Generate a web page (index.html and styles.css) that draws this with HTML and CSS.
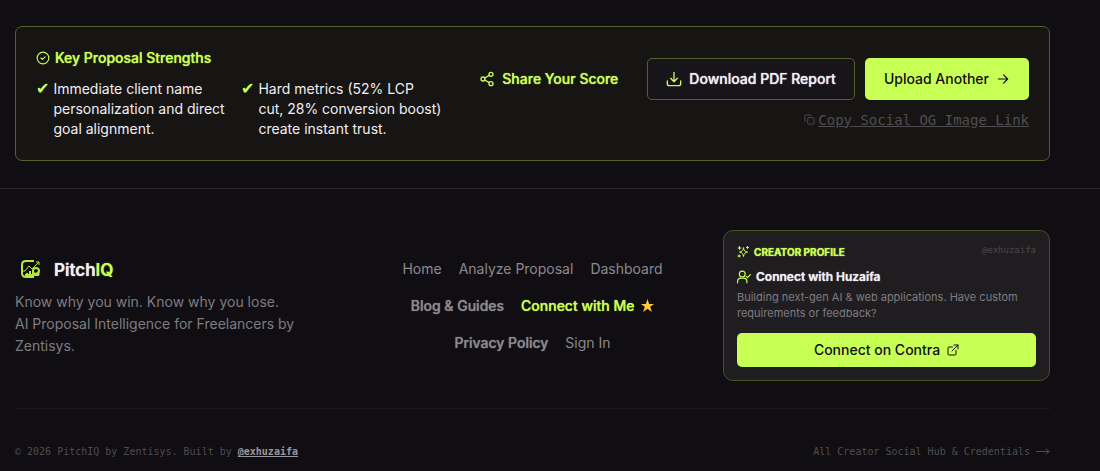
FILE: index.html
```html
<!DOCTYPE html>
<html lang="en">
<head>
    <meta charset="UTF-8">
    <meta name="viewport" content="width=device-width, initial-scale=1.0">
    <title>PitchIQ</title>
    <link rel="stylesheet" href="styles.css">
</head>
<body>
    <main class="page">
        <section class="results-card">
            <div class="strengths">
                <h2 class="strengths-title">
                    <svg class="icon" width="14" height="14" viewBox="0 0 24 24"><circle cx="12" cy="12" r="10"/><path d="m8.500 12 2.500 2.500 4.500-4.500"/></svg>
                    Key Proposal Strengths
                </h2>
                <ul class="strengths-list">
                    <li><span class="check">✔</span><span>Immediate client name personalization and direct goal alignment.</span></li>
                    <li><span class="check">✔</span><span>Hard metrics (52% LCP<br>cut, 28% conversion boost) create instant trust.</span></li>
                </ul>
            </div>
            <div class="actions">
                <div class="buttons">
                    <button type="button" class="btn btn-ghost">
                        <svg class="icon" width="16" height="16" viewBox="0 0 24 24"><circle cx="18" cy="5" r="3"/><circle cx="6" cy="12" r="3"/><circle cx="18" cy="19" r="3"/><path d="m8.590 13.510 6.830 3.980M15.410 6.510l-6.820 3.980"/></svg>
                        Share Your Score
                    </button>
                    <button type="button" class="btn btn-outline">
                        <svg class="icon" width="16" height="16" viewBox="0 0 24 24"><path d="M12 2v14M7 11l5 5 5-5M2 15v4a3 3 0 0 0 3 3h14a3 3 0 0 0 3-3v-4"/></svg>
                        Download PDF Report
                    </button>
                    <button type="button" class="btn btn-primary">
                        Upload Another
                        <svg class="icon" width="14" height="14" viewBox="0 0 24 24"><path d="M4 12h16M13 5l7 7-7 7"/></svg>
                    </button>
                </div>
                <button type="button" class="copy-link">
                    <svg class="icon" width="11" height="11" viewBox="0 0 24 24"><rect x="8" y="8" width="14" height="14" rx="2"/><path d="M4 16a2 2 0 0 1-2-2V4a2 2 0 0 1 2-2h10a2 2 0 0 1 2 2"/></svg>
                    <span>Copy Social OG Image Link</span>
                </button>
            </div>
        </section>
    </main>

    <footer class="footer">
        <div class="footer-top">
            <div class="brand">
                <a href="#" class="logo">
                    <svg class="logo-mark" width="32" height="32" viewBox="0 0 32 32">
                        <path class="frame" d="M19 7h-8q-4 0-4 4v8q0 4 4 4h8"/>
                        <path d="M7 17h3l4-5 3 3 7-7M21 8h3v3"/>
                        <path class="bars" d="M12 21v-2M15 21v-4M18 21v-5"/>
                        <circle class="frame" cx="21" cy="17" r="3"/>
                        <path class="frame" d="m22 18 2 3M10 21h14"/>
                    </svg>
                    <span>Pitch<span class="accent">IQ</span></span>
                </a>
                <p>Know why you win. Know why you lose.<br>AI Proposal Intelligence for Freelancers by Zentisys.</p>
            </div>

            <nav class="footer-nav">
                <a href="#">Home</a>
                <a href="#">Analyze Proposal</a>
                <a href="#">Dashboard</a>
                <a href="#" class="strong">Blog &amp; Guides</a>
                <a href="#" class="strong accent">Connect with Me
                    <svg class="star" width="13" height="13" viewBox="0 0 24 24"><path d="m12 0 3 9h9l-7 5.500 3 9.500-8-6-8 6 3-9.500L0 9h9z"/></svg>
                </a>
                <a href="#" class="strong">Privacy Policy</a>
                <a href="#">Sign In</a>
            </nav>

            <aside class="creator">
                <div class="creator-head">
                    <span class="creator-label">
                        <svg class="icon" width="12" height="12" viewBox="0 0 24 24"><path d="M13 4c1 6 3 7 8 8-5 1-7 3-8 9-1-6-3-8-8-9 5-1 7-2 8-8zM5 1v6M2 4h6M21 1v4M19 3h4"/><circle cx="4" cy="20" r="2"/></svg>
                        CREATOR PROFILE
                    </span>
                    <span class="handle">@exhuzaifa</span>
                </div>
                <h3 class="creator-title">
                    <svg class="icon" width="14" height="14" viewBox="0 0 24 24"><circle cx="9" cy="7" r="5"/><path d="M1 22v-2a6 6 0 0 1 6-6h4a6 6 0 0 1 6 6v2M16 11l2 2 5-5"/></svg>
                    Connect with Huzaifa
                </h3>
                <p>Building next-gen AI &amp; web applications. Have custom requirements or feedback?</p>
                <a href="#" class="btn-contra">
                    Connect on Contra
                    <svg class="icon" width="12" height="12" viewBox="0 0 24 24"><path d="M14 2h8v8M22 2 10 14M18 13v7a2 2 0 0 1-2 2H4a2 2 0 0 1-2-2V8a2 2 0 0 1 2-2h7"/></svg>
                </a>
            </aside>
        </div>

        <div class="footer-bottom">
            <span>© 2026 PitchIQ by Zentisys. Built by <a href="#" class="author">@exhuzaifa</a></span>
            <a href="#" class="hub">All Creator Social Hub &amp; Credentials
                <svg class="icon hub-arrow" width="14" height="7" viewBox="0 0 14 7"><path d="M0 3.500h13M10 1l3 2.500L10 6"/></svg>
            </a>
        </div>
    </footer>
</body>
</html>
```

FILE: styles.css
```css
* {
    box-sizing: border-box;
}

body {
    margin: 0;
    background-color: #100e12;
    color: #f0eef2;
    font-family: Inter, sans-serif;
    font-size: 14px;
    line-height: 20px;
}

h2,
h3,
p,
ul {
    margin: 0;
    padding: 0;
}

a {
    color: inherit;
    text-decoration: none;
}

button {
    font: inherit;
    cursor: pointer;
}

.icon {
    flex-shrink: 0;
    fill: none;
    stroke: currentColor;
    stroke-width: 2;
    stroke-linecap: round;
    stroke-linejoin: round;
}

.accent {
    color: #c8ff55;
}

.page {
    padding: 26px 50px 27px 15px;
}

.results-card {
    display: flex;
    justify-content: space-between;
    align-items: center;
    padding: 21px 20px;
    background-color: #171513;
    border: 1px solid #52612a;
    border-radius: 7px;
}

.strengths-title,
.btn-ghost,
.btn-outline,
.strong,
.creator-title,
.creator-label,
.logo {
    text-shadow: 0 0 1px currentColor;
}

.strengths-title {
    display: flex;
    align-items: center;
    gap: 5px;
    margin-bottom: 11px;
    color: #c8ff55;
    font-size: 14px;
    font-weight: 500;
    line-height: 20px;
}

.strengths-list {
    display: grid;
    grid-template-columns: 190px 205px;
    gap: 15px;
    list-style: none;
}

.strengths-list li {
    display: flex;
    gap: 4px;
}

.check {
    flex: 0 0 13px;
    color: #c8ff55;
    font-family: "DejaVu Sans", sans-serif;
    font-size: 16px;
}

.actions {
    display: flex;
    flex-direction: column;
    align-items: flex-end;
    gap: 10px;
}

.buttons {
    display: flex;
    gap: 10px;
}

.btn {
    display: flex;
    align-items: center;
    gap: 7px;
    padding: 10px 18px;
    border: 1px solid transparent;
    border-radius: 5px;
    font-weight: 500;
}

.btn-ghost {
    background: none;
    color: #c8ff55;
}

.btn-outline {
    background-color: #18151a;
    border-color: #52612a;
    color: #f0eef2;
}

.btn-outline .icon {
    color: #c8ff55;
}

.btn-primary {
    background-color: #c8ff55;
    color: #100e12;
}

.copy-link {
    display: flex;
    align-items: center;
    gap: 3px;
    padding: 0;
    border: 0;
    background: none;
    color: #4f4d51;
    font-family: "DejaVu Sans Mono", monospace;
}

.copy-link span {
    text-decoration: underline;
}

.footer {
    padding: 41px 50px 8px 15px;
    border-top: 1px solid #29272b;
}

.footer-top {
    display: grid;
    grid-template-columns: 327px 1fr 327px;
    gap: 27px;
    align-items: center;
    padding-bottom: 27px;
    border-bottom: 1px solid #1b191d;
}

.brand p {
    max-width: 290px;
    color: #7e7c80;
    line-height: 22px;
}

.logo {
    display: inline-flex;
    align-items: center;
    gap: 7px;
    margin-bottom: 5px;
    font-size: 17px;
    font-weight: 600;
}

.logo-mark {
    fill: none;
    stroke: #b5e63f;
    stroke-width: 1;
}

.logo-mark .frame,
.logo-mark .bars {
    stroke-width: 2;
}

.footer-nav {
    display: flex;
    flex-wrap: wrap;
    justify-content: center;
    gap: 17px;
    padding: 0 20px;
    color: #8b898d;
}

.footer-nav .strong {
    font-weight: 500;
}

.footer-nav .accent {
    color: #c8ff55;
}

.star {
    margin-left: 3px;
    vertical-align: -1px;
    fill: #ffc83d;
}

.creator {
    padding: 13px;
    background-color: #201d21;
    border: 1px solid #465225;
    border-radius: 10px;
}

.creator-head {
    display: flex;
    justify-content: space-between;
    line-height: 16px;
}

.creator-label {
    display: flex;
    align-items: center;
    gap: 5px;
    color: #c8ff55;
    font-size: 10px;
    font-weight: 700;
}

.handle {
    color: #4a484c;
    font-family: "DejaVu Sans Mono", monospace;
    font-size: 9px;
    line-height: 12px;
}

.creator-title {
    display: flex;
    align-items: center;
    gap: 5px;
    margin: 8px 0 3px;
    font-size: 12px;
    font-weight: 600;
    line-height: 18px;
}

.creator-title .icon {
    color: #c8ff55;
}

.creator p {
    color: #7e7c80;
    font-size: 11px;
    line-height: 16px;
}

.btn-contra {
    display: flex;
    justify-content: center;
    align-items: center;
    gap: 7px;
    margin-top: 12px;
    padding: 7px;
    background-color: #c8ff55;
    border-radius: 5px;
    color: #100e12;
    font-weight: 500;
}

.footer-bottom {
    display: flex;
    justify-content: space-between;
    align-items: center;
    padding-top: 33px;
    color: #4f4d51;
    font-family: "DejaVu Sans Mono", monospace;
    font-size: 10px;
}

.hub-arrow {
    stroke-width: 1;
}

.author {
    color: #99979b;
    font-weight: 700;
    text-decoration: underline;
}
```
